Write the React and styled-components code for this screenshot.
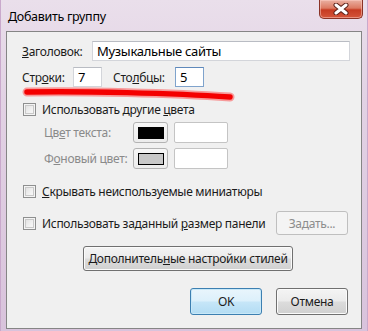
import React from "react";
import styled, { createGlobalStyle } from "styled-components";

const GlobalStyle = createGlobalStyle`
  html, body {
    margin: 0;
    padding: 0;
  }
  body {
    width: 368px;
    height: 331px;
    overflow: hidden;
    background: #dcc8de;
    font-family: "Noto Sans", "Segoe UI", sans-serif;
    font-size: 12px;
    letter-spacing: -0.3px;
    color: #1b1b1b;
  }
`;

const Window = styled.div`
  width: 368px;
  height: 331px;
  box-sizing: border-box;
  display: flex;
  flex-direction: column;
  padding: 0 6px 2px 6px;
  background: linear-gradient(180deg, #eadfeb 0%, #e2d2e4 30%, #d9c3dc 100%);
  box-shadow: inset 1px 0 0 #c9a9cc, inset -1px 0 0 #c9a9cc;
`;

const TitleBar = styled.div`
  height: 31px;
  display: flex;
  justify-content: space-between;
  align-items: flex-start;
`;

const Title = styled.div`
  padding: 8px 0 0 2px;
  font-size: 12.5px;
  color: #000;
`;

const CloseButton = styled.div`
  width: 44px;
  height: 19px;
  margin-right: -1px;
  box-sizing: border-box;
  display: flex;
  align-items: center;
  justify-content: center;
  border: 1px solid #8a3326;
  border-top: none;
  border-radius: 0 0 5px 5px;
  background: linear-gradient(180deg, #eab0a2 0%, #dc7a62 45%, #c63b22 55%, #d4553a 100%);
  box-shadow: inset 0 0 0 1px rgba(255, 210, 200, 0.5);
`;

const Client = styled.div`
  flex: 1;
  display: flex;
  flex-direction: column;
  background: #f0f0f0;
  border: 1px solid #858585;
  padding: 9px 11px 0 15px;
`;

const Row = styled.div`
  display: flex;
  align-items: center;
  height: ${(p) => p.$h || 20}px;
  margin-top: ${(p) => p.$mt || 0}px;
`;

const Label = styled.span`
  width: ${(p) => p.$w}px;
  margin-left: ${(p) => p.$ml || 0}px;
  padding-left: ${(p) => p.$pl || 0}px;
  box-sizing: border-box;
  color: ${(p) => (p.$dim ? "#8a8a8a" : "#1b1b1b")};
  white-space: nowrap;
`;

// mnemonic underline (one letter)
const U = styled.span`
  text-decoration: underline;
`;

const TextBox = styled.div`
  box-sizing: border-box;
  height: 20px;
  width: ${(p) => (p.$w ? p.$w + "px" : "auto")};
  flex: ${(p) => (p.$w ? "none" : 1)};
  display: flex;
  align-items: center;
  padding-left: 4px;
  background: #fff;
  border: 1px solid ${(p) => (p.$focus ? "#7fa3cc" : "#d3d5da")};
  border-top-color: ${(p) => (p.$focus ? "#5f89bb" : "#b9bcc3")};
  font-size: 13px;
  color: #000;
`;

const RedMark = styled.svg`
  display: block;
  width: 216px;
  height: 15px;
`;

const Check = styled.span`
  width: 13px;
  height: 13px;
  flex: none;
  box-sizing: border-box;
  margin-left: 1px;
  margin-right: 6px;
  border: 1px solid #8e8f8f;
  background: linear-gradient(135deg, #dcdcdc 0%, #f2f2f2 60%, #fbfbfb 100%);
  box-shadow: inset 0 0 0 1px #f4f4f4, inset 0 0 0 2px #c9c9c9;
`;

const ColorButton = styled.div`
  width: 35px;
  height: 21px;
  box-sizing: border-box;
  display: flex;
  align-items: center;
  justify-content: center;
  border: 1px solid #b3b3b3;
  border-radius: 3px;
  background: linear-gradient(180deg, #f7f7f7 0%, #ececec 100%);
`;

const Swatch = styled.span`
  width: 26px;
  height: 12px;
  box-sizing: border-box;
  border: 1px solid #000;
  background: ${(p) => p.$color};
`;

const WhiteBox = styled.div`
  width: 54px;
  height: 21px;
  box-sizing: border-box;
  margin-left: 6px;
  border: 1px solid #c4c4c4;
  border-radius: 2px;
  background: #fff;
`;

const Button = styled.div`
  box-sizing: border-box;
  width: ${(p) => p.$w}px;
  height: ${(p) => p.$h || 25}px;
  margin-left: ${(p) => p.$ml || "0"};
  margin-right: ${(p) => p.$mr || 0}px;
  display: flex;
  align-items: center;
  justify-content: center;
  border-radius: 3px;
  white-space: nowrap;
  color: #1b1b1b;
  border: 1px solid #707070;
  background: linear-gradient(180deg, #f4f4f4 0%, #ebebeb 48%, #dcdcdc 52%, #d0d0d0 100%);
  box-shadow: inset 0 0 0 1px #fbfbfb;

  ${(p) =>
    p.$default &&
    `
    border-color: #3c7fb1;
    background: linear-gradient(180deg, #e9f5fc 0%, #dcf0fb 48%, #c6e6f8 52%, #b3dcf3 100%);
    box-shadow: inset 0 0 0 1px #c8e8f8;
  `}

  ${(p) =>
    p.$disabled &&
    `
    color: #8d8d8d;
    border-color: #bfbfbf;
    background: #f4f4f4;
    box-shadow: none;
  `}
`;

const ButtonRow = styled.div`
  display: flex;
  justify-content: flex-end;
  gap: 14px;
  margin-top: 17px;
  margin-right: 2px;
`;

const CenterRow = styled.div`
  display: flex;
  justify-content: center;
  margin-top: 11px;
  margin-right: -4px;
`;

export default function App() {
  return (
    <>
      <GlobalStyle />
      <Window>
        <TitleBar>
          <Title>Добавить группу</Title>
          <CloseButton>
            <svg width="16" height="12" viewBox="0 0 16 12">
              <path d="M3 2 L13 10 M13 2 L3 10" stroke="#5b2119" strokeWidth="5" strokeLinecap="round" />
              <path d="M3 2 L13 10 M13 2 L3 10" stroke="#fff" strokeWidth="3" strokeLinecap="round" />
            </svg>
          </CloseButton>
        </TitleBar>
        <Client>
          <Row>
            <Label $w={70}>
              <U>З</U>аголовок:
            </Label>
            <TextBox>Музыкальные сайты</TextBox>
          </Row>
          <Row $mt={6}>
            <Label $w={51}>
              Стр<U>о</U>ки:
            </Label>
            <TextBox $w={29}>7</TextBox>
            <Label $w={62} $ml={11}>
              Сто<U>л</U>бцы:
            </Label>
            <TextBox $w={29} $focus>
              5
            </TextBox>
          </Row>
          <RedMark viewBox="0 0 216 15">
            <path d="M5 5 C 60 4, 150 6, 208 10" stroke="#ff3030" strokeOpacity="0.45" strokeWidth="9" fill="none" strokeLinecap="round" />
            <path d="M5 5 C 60 4, 150 6, 208 10" stroke="#f40000" strokeWidth="5.5" fill="none" strokeLinecap="round" />
          </RedMark>
          <Row $h={15}>
            <Check />
            <span>
              Использовать другие <U>ц</U>вета
            </span>
          </Row>
          <Row $h={21} $mt={5}>
            <Label $w={111} $pl={22} $dim>
              Цв<U>е</U>т текста:
            </Label>
            <ColorButton>
              <Swatch $color="#000" />
            </ColorButton>
            <WhiteBox />
          </Row>
          <Row $h={21} $mt={5}>
            <Label $w={111} $pl={22} $dim>
              Ф<U>о</U>новый цвет:
            </Label>
            <ColorButton>
              <Swatch $color="#c8c8c8" />
            </ColorButton>
            <WhiteBox />
          </Row>
          <Row $h={15} $mt={15}>
            <Check />
            <span>
              <U>С</U>крывать неиспользуемые миниатюры
            </span>
          </Row>
          <Row $h={24} $mt={12}>
            <Check />
            <span>
              Использовать заданный <U>р</U>азмер панели
            </span>
            <Button $w={72} $h={24} $ml="auto" $mr={2} $disabled>
              Задать...
            </Button>
          </Row>
          <CenterRow>
            <Button $w={210}>
              Дополнитель<U>н</U>ые настройки стилей
            </Button>
          </CenterRow>
          <ButtonRow>
            <Button $w={72} $h={27} $default>
              OK
            </Button>
            <Button $w={72} $h={27}>
              Отмена
            </Button>
          </ButtonRow>
        </Client>
      </Window>
    </>
  );
}
